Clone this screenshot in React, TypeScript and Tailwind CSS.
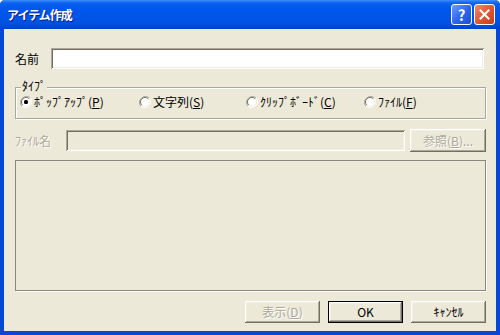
import type { ReactNode } from "react";

const font = {
  fontFamily: '"Noto Sans CJK JP", "MS UI Gothic", sans-serif',
};

const raised =
  "shadow-[inset_-1px_-1px_0_#716f64,inset_1px_1px_0_#ffffff,inset_-2px_-2px_0_#aca899,inset_2px_2px_0_#f1efe2]";
const sunken =
  "shadow-[inset_1px_1px_0_#aca899,inset_-1px_-1px_0_#ffffff,inset_2px_2px_0_#716f64,inset_-2px_-2px_0_#f1efe2]";

function Radio({ checked }: { checked?: boolean }) {
  return (
    <svg width="12" height="12" viewBox="0 0 12 12" className="shrink-0">
      <path d="M10.2 1.8A6 6 0 0 0 1.8 10.2" fill="none" stroke="#aca899" strokeWidth="1" />
      <path d="M1.8 10.2A6 6 0 0 0 10.2 1.8" fill="none" stroke="#ffffff" strokeWidth="1" />
      <circle cx="6" cy="6" r="4.5" fill="#ffffff" />
      <path d="M9.2 2.8A4.5 4.5 0 0 0 2.8 9.2" fill="none" stroke="#716f64" strokeWidth="1" />
      <path d="M2.8 9.2A4.5 4.5 0 0 0 9.2 2.8" fill="none" stroke="#f1efe2" strokeWidth="1" />
      {checked ? <rect x="4" y="4" width="4" height="4" rx="1.5" fill="#000000" /> : null}
    </svg>
  );
}

function RadioItem({
  checked,
  width,
  children,
}: {
  checked?: boolean;
  width: string;
  children: ReactNode;
}) {
  return (
    <div className={`flex items-center gap-[2px] ${width}`}>
      <Radio checked={checked} />
      <span className="leading-none">{children}</span>
    </div>
  );
}

function Button({
  children,
  disabled,
  isDefault,
}: {
  children: ReactNode;
  disabled?: boolean;
  isDefault?: boolean;
}) {
  if (isDefault) {
    return (
      <div className="h-[22px] w-[75px] border border-black bg-[#ece9d8]">
        <div
          className={`flex h-full w-full items-center justify-center ${raised}`}
        >
          {children}
        </div>
      </div>
    );
  }
  return (
    <div
      className={`flex h-[22px] w-[75px] items-center justify-center bg-[#ece9d8] ${raised} ${
        disabled ? "text-[#aca899] [text-shadow:1px_1px_0_#ffffff]" : ""
      }`}
    >
      {children}
    </div>
  );
}

export default function App() {
  return (
    <div
      style={font}
      className="flex h-[335px] w-[500px] flex-col overflow-hidden rounded-t-[5px] bg-[#0846d6] text-[12px] text-black"
    >
      {/* title bar */}
      <div className="flex h-[29px] shrink-0 items-center bg-[linear-gradient(to_bottom,#3d8ff8_0px,#0b62f0_3px,#0058ec_8px,#0054e6_18px,#0050e0_24px,#0040d0_29px)] pl-[7px] pr-[5px]">
        <span className="flex-1 text-[12px] font-bold tracking-[-1px] text-white [text-shadow:1px_1px_0_#0a1d8a]">
          アイテム作成
        </span>
        <div className="flex items-center gap-[2px]">
          <div className="flex h-[21px] w-[21px] items-center justify-center rounded-[3px] border border-white bg-[linear-gradient(135deg,#6b9ff9,#2a63ec_55%,#1e4fd6)] text-[15px] font-bold leading-none text-white">
            ?
          </div>
          <div className="flex h-[21px] w-[21px] items-center justify-center rounded-[3px] border border-white bg-[linear-gradient(135deg,#f08a6a,#e0532e_55%,#c33f1b)]">
            <svg width="11" height="11" viewBox="0 0 11 11">
              <path d="M1.5 1.5L9.5 9.5M9.5 1.5L1.5 9.5" stroke="#ffffff" strokeWidth="2" strokeLinecap="square" />
            </svg>
          </div>
        </div>
      </div>

      {/* client area */}
      <div className="mx-[4px] mb-[4px] flex flex-1 flex-col bg-[#ece9d8] pl-[11px] pr-[10px] pt-[19px]">
        {/* name row */}
        <div className="flex h-[21px] items-center">
          <span className="w-[36px] leading-none">名前</span>
          <div className={`mr-[2px] h-[21px] flex-1 bg-white ${sunken}`} />
        </div>

        {/* type group */}
        <div className="relative mt-[18px] h-[32px] border border-[#aca899] shadow-[inset_1px_1px_0_#ffffff,1px_1px_0_#ffffff]">
          <span className="absolute left-[5px] top-[-8px] bg-[#ece9d8] px-[1px] leading-none">
            ﾀｲﾌﾟ
          </span>
          <div className="flex h-full items-center pb-[2px] pl-[4px]">
            <RadioItem checked width="w-[119px]">
              ﾎﾟｯﾌﾟｱｯﾌﾟ(<u>P</u>)
            </RadioItem>
            <RadioItem width="w-[107px]">
              文字列(<u>S</u>)
            </RadioItem>
            <RadioItem width="w-[118px]">
              ｸﾘｯﾌﾟﾎﾞｰﾄﾞ(<u>C</u>)
            </RadioItem>
            <RadioItem width="w-[100px]">
              ﾌｧｲﾙ(<u>F</u>)
            </RadioItem>
          </div>
        </div>

        {/* file row */}
        <div className="mt-[10px] flex h-[23px] items-center">
          <span className="w-[51px] leading-none text-[#aca899] [text-shadow:1px_1px_0_#ffffff]">
            ﾌｧｲﾙ名
          </span>
          <div className={`mr-[5px] h-[21px] flex-1 bg-[#ece9d8] ${sunken}`} />
          <div
            className={`flex h-[23px] w-[76px] items-center justify-center text-[#aca899] [text-shadow:1px_1px_0_#ffffff] ${raised}`}
          >
            参照(<u>B</u>)...
          </div>
        </div>

        {/* preview box */}
        <div className="mt-[8px] h-[131px] border border-[#8a887c] shadow-[1px_1px_0_#ffffff]" />

        {/* buttons */}
        <div className="mt-[10px] flex justify-end gap-[8px]">
          <Button disabled>
            表示(<u>D</u>)
          </Button>
          <Button isDefault>OK</Button>
          <Button>ｷｬﾝｾﾙ</Button>
        </div>
      </div>
    </div>
  );
}
